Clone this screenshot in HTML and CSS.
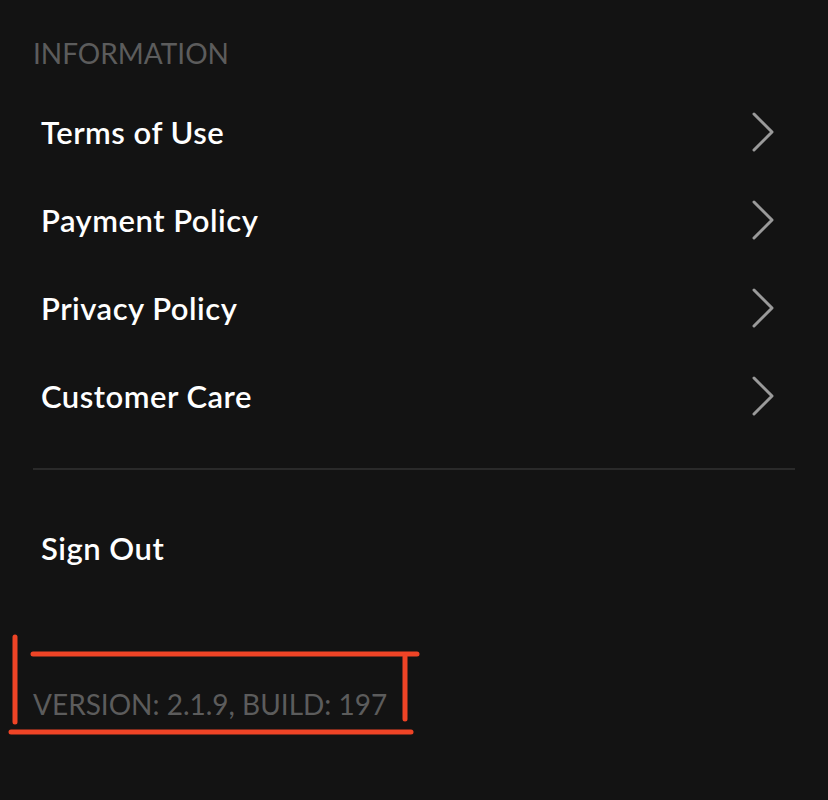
FILE: index.html
```html
<!DOCTYPE html>
<html>
<head>
<meta charset="utf-8">
<link rel="stylesheet" href="styles.css">
</head>
<body>
<div class="screen">
  <div class="section-title">INFORMATION</div>
  <ul class="menu">
    <li class="menu-row"><span class="menu-label">Terms of Use</span><svg class="chev" width="24" height="42" viewBox="0 0 24 42"><path d="M3 3 L21 21 L3 39" fill="none" stroke="#9a9a9a" stroke-width="3" stroke-linecap="round" stroke-linejoin="round"/></svg></li>
    <li class="menu-row"><span class="menu-label">Payment Policy</span><svg class="chev" width="24" height="42" viewBox="0 0 24 42"><path d="M3 3 L21 21 L3 39" fill="none" stroke="#9a9a9a" stroke-width="3" stroke-linecap="round" stroke-linejoin="round"/></svg></li>
    <li class="menu-row"><span class="menu-label">Privacy Policy</span><svg class="chev" width="24" height="42" viewBox="0 0 24 42"><path d="M3 3 L21 21 L3 39" fill="none" stroke="#9a9a9a" stroke-width="3" stroke-linecap="round" stroke-linejoin="round"/></svg></li>
    <li class="menu-row"><span class="menu-label">Customer Care</span><svg class="chev" width="24" height="42" viewBox="0 0 24 42"><path d="M3 3 L21 21 L3 39" fill="none" stroke="#9a9a9a" stroke-width="3" stroke-linecap="round" stroke-linejoin="round"/></svg></li>
  </ul>
  <div class="divider"></div>
  <div class="menu-row signout"><span class="menu-label">Sign Out</span></div>
  <div class="version">VERSION: 2.1.9, BUILD: 197</div>
  <svg class="annotation" width="430" height="110" viewBox="0 0 430 110">
    <g stroke="#ef4426" stroke-width="5" stroke-linecap="round" fill="none">
      <line x1="15" y1="10" x2="15" y2="95"/>
      <line x1="33" y1="27" x2="417" y2="27"/>
      <line x1="405" y1="30" x2="405" y2="92"/>
      <line x1="11" y1="105" x2="411" y2="105"/>
    </g>
  </svg>
</div>
</body>
</html>
```

FILE: styles.css
```css
* { box-sizing: border-box; }
html, body {
  margin: 0;
  padding: 0;
  background: #131313;
}
.screen {
  position: relative;
  width: 828px;
  height: 800px;
  padding: 38px 33px 0 33px;
  font-family: Lato, "Open Sans", sans-serif;
  background: #131313;
}
.section-title {
  font-size: 28px;
  line-height: 30px;
  height: 30px;
  color: #5c5c5c;
  font-weight: 400;
}
.menu {
  list-style: none;
  margin: 20px 0 0 0;
  padding: 0;
}
.menu-row {
  display: flex;
  align-items: center;
  justify-content: space-between;
  height: 88px;
  padding: 0 20px 0 8px;
}
.menu-label {
  color: #ffffff;
  font-size: 31px;
  font-weight: 600;
  line-height: 36px;
  letter-spacing: 0.5px;
}
.chev { display: block; flex: none; }
.divider {
  height: 2px;
  background: #2a2a2a;
  margin-top: 28px;
}
.signout { margin-top: 34px; }
.version {
  margin-top: 97px;
  font-size: 28px;
  line-height: 30px;
  color: #5c5c5c;
}
.annotation {
  position: absolute;
  left: 0;
  top: 627px;
}
```
